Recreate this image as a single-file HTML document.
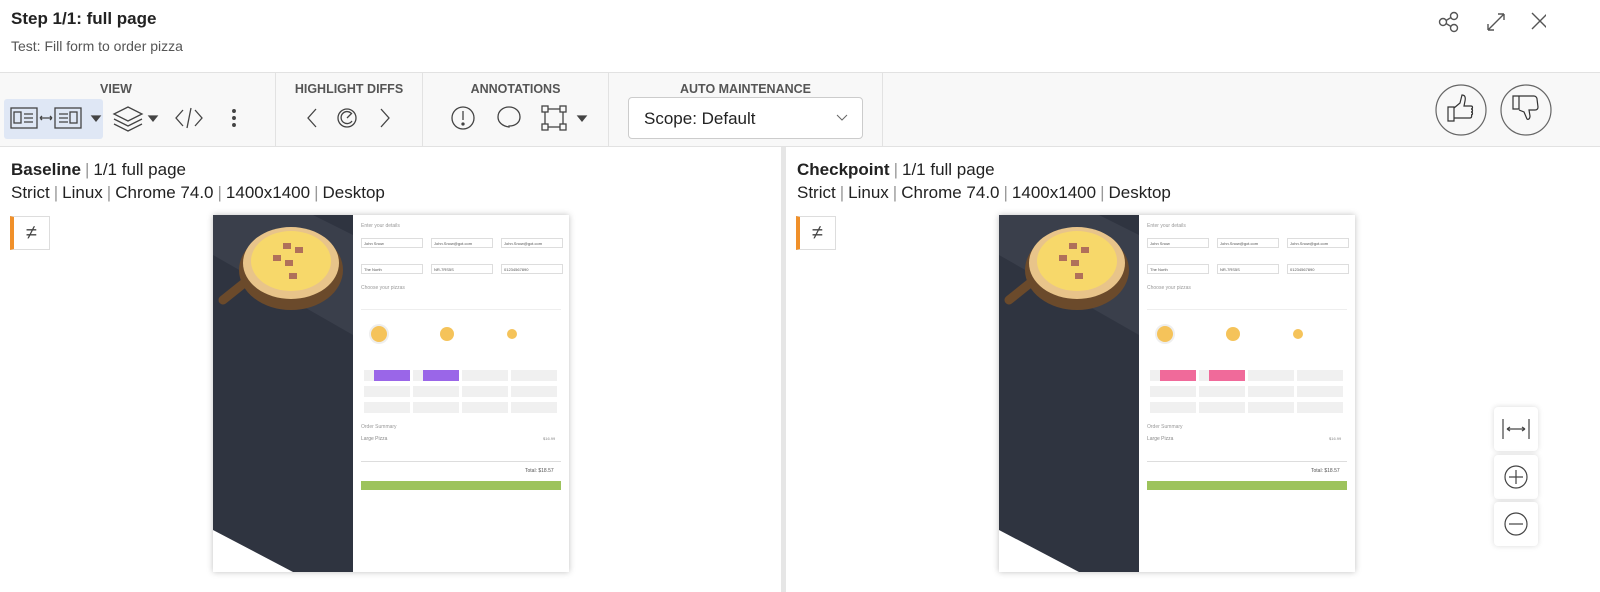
<!DOCTYPE html>
<html><head><style>
*{box-sizing:border-box;margin:0;padding:0}
body{width:1600px;height:592px;overflow:hidden;background:#fff;font-family:"Liberation Sans",sans-serif;color:#222;position:relative}
.abs{position:absolute}
.tb{top:72px;left:0;width:1600px;height:75px;background:#f8f8f8;border-top:1px solid #e2e2e2;border-bottom:1px solid #e2e2e2}
.lbl{font-size:12.5px;font-weight:bold;color:#555;top:9px;text-align:center}
.sep{top:0;width:1px;height:74px;background:#e2e2e2}
.meta1{font-size:17px}
.meta2{font-size:17px}
.pipe{color:#999;margin:0 4px}
.shot{width:356px;height:357px;background:#fff;box-shadow:0 0 6px rgba(0,0,0,.25);overflow:hidden}
.dark{left:0;top:0;width:140px;height:357px;background:#2f3440}
.f{position:absolute;font-size:4px;color:#888}
.inp{position:absolute;height:10px;width:62px;border:1px solid #ddd;font-size:4px;color:#555;padding:2px}
.tp{position:absolute;height:11px;width:46px;background:#f0f0f0}
.zb{width:44px;height:44px;background:#fff;border-radius:4px;box-shadow:0 0 6px rgba(0,0,0,.15)}
</style></head><body>
<div class="abs" style="left:11px;top:9px;font-size:17px;font-weight:bold">Step 1/1: full page</div>
<div class="abs" style="left:11px;top:38px;font-size:14px;color:#555">Test: Fill form to order pizza</div>
<svg class="abs" style="left:1436px;top:10px" width="110" height="24" viewBox="0 0 110 24" fill="none" stroke="#555" stroke-width="1.4">
<circle cx="7" cy="12" r="3.5"/><circle cx="18" cy="6" r="3.5"/><circle cx="18" cy="18" r="3.5"/><path d="M10 10.5L15 7.5M10 13.5L15 16.5"/>
<path d="M52 20L68 4M52 20v-6M52 20h6M68 4h-6M68 4v6"/>
<path d="M96 3l16 16M112 3L96 19"/></svg>
<div class="abs tb">
<div class="abs lbl" style="left:0;width:232px">VIEW</div>
<div class="abs sep" style="left:275px"></div>
<div class="abs lbl" style="left:276px;width:146px">HIGHLIGHT DIFFS</div>
<div class="abs sep" style="left:422px"></div>
<div class="abs lbl" style="left:423px;width:185px">ANNOTATIONS</div>
<div class="abs sep" style="left:608px"></div>
<div class="abs lbl" style="left:609px;width:273px">AUTO MAINTENANCE</div>
<div class="abs sep" style="left:882px"></div>
<div class="abs" style="left:4px;top:26px;width:99px;height:40px;background:#dfe7f5;border-radius:3px"></div>
<svg class="abs" style="left:0;top:26px" width="600" height="40" viewBox="0 0 600 40" fill="none" stroke="#444" stroke-width="1.3">
<rect x="11" y="9" width="26" height="20"/><rect x="14" y="13" width="7" height="11"/><path d="M24 15h9M24 19h9M24 23h9"/>
<path d="M40 19h12M40 19l2-2M40 19l2 2M52 19l-2-2M52 19l-2 2"/>
<rect x="55" y="9" width="26" height="20"/><path d="M59 15h9M59 19h9M59 23h9"/><rect x="70" y="13" width="7" height="11"/>
<path d="M92 17h8l-4 5z" fill="#444"/>
<path d="M114 15l14-7 14 7-14 7z M114 20l14 7 14-7 M114 25l14 7 14-7"/>
<path d="M149 17h8l-4 5z" fill="#444"/>
<path d="M183 11l-7 8 7 8M195 11l7 8-7 8M191 9l-4 20"/>
<circle cx="234" cy="12" r="1.3" fill="#444"/><circle cx="234" cy="19" r="1.3" fill="#444"/><circle cx="234" cy="26" r="1.3" fill="#444"/>
<path d="M316 10l-8 9 8 9M381 10l8 9-8 9"/>
<circle cx="347" cy="19" r="9"/><path d="M351 14a6 6 0 1 0 1 8M347 19l5-5"/>
<circle cx="463" cy="19" r="11"/><path d="M463 12v9"/><circle cx="463" cy="25" r="1" fill="#444"/>
<path d="M509 28c-7-1-11-5-11-10 0-6 5-10 11-10s11 4 11 10c0 5-4 9-11 9z"/>
<rect x="545" y="10" width="18" height="18"/><rect x="542" y="7" width="6" height="6" fill="#f8f8f8"/><rect x="560" y="7" width="6" height="6" fill="#f8f8f8"/><rect x="542" y="25" width="6" height="6" fill="#f8f8f8"/><rect x="560" y="25" width="6" height="6" fill="#f8f8f8"/>
<path d="M578 17h8l-4 5z" fill="#444"/></svg>
<div class="abs" style="left:628px;top:24px;width:235px;height:42px;background:#fff;border:1px solid #ccc;border-radius:4px;font-size:17px;padding:11px 15px">Scope: Default<svg class="abs" style="right:14px;top:16px" width="12" height="8" fill="none" stroke="#666"><path d="M1 1l5 5 5-5"/></svg></div>
<svg class="abs" style="left:1435px;top:11px" width="130" height="54" viewBox="0 0 130 54" fill="none" stroke="#666" stroke-width="1.2">
<circle cx="26" cy="26" r="25"/><circle cx="91" cy="26" r="25"/>
<path d="M13 23h6v14h-6zM19 24l6-5 2-8c2 0 4 1 3 6l-1 5h7c2 0 2 3 0 3 2 0 2 3 0 3 2 0 2 3 0 3 1 0 1 3-1 3H19" stroke="#333"/>
<path d="M78 12h6v13h-6zM84 12h15c2 0 3 2 3 3l1 8c0 2-1 3-3 3h-6l1 6c0 3-2 4-3 3l-3-7-5-2" stroke="#333"/></svg>
</div>
<div class="abs" style="left:781px;top:147px;width:5px;height:445px;background:#e6e6e6"></div>

<div class="abs meta1" style="left:11px;top:160px"><b>Baseline</b><span class="pipe">|</span>1/1 full page</div>
<div class="abs meta2" style="left:11px;top:183px">Strict<span class="pipe">|</span>Linux<span class="pipe">|</span>Chrome 74.0<span class="pipe">|</span>1400x1400<span class="pipe">|</span>Desktop</div>
<div class="abs meta1" style="left:797px;top:160px"><b>Checkpoint</b><span class="pipe">|</span>1/1 full page</div>
<div class="abs meta2" style="left:797px;top:183px">Strict<span class="pipe">|</span>Linux<span class="pipe">|</span>Chrome 74.0<span class="pipe">|</span>1400x1400<span class="pipe">|</span>Desktop</div>

<div class="abs" style="left:10px;top:216px;width:40px;height:34px;border:1px solid #ddd;border-left:4px solid #f0902a;font-size:20px;text-align:center;line-height:32px;color:#444">≠</div>
<div class="abs" style="left:796px;top:216px;width:40px;height:34px;border:1px solid #ddd;border-left:4px solid #f0902a;font-size:20px;text-align:center;line-height:32px;color:#444">≠</div>

<!--SHOT-->
<div class="abs shot" style="left:213px;top:215px" id="s1"></div>
<div class="abs shot" style="left:999px;top:215px" id="s2"></div>

<div class="abs zb" style="left:1494px;top:407px"><svg width="44" height="44" fill="none" stroke="#444" stroke-width="1.2"><path d="M9 12v20M35 12v20M13 22h18M13 22l3-2M13 22l3 2M31 22l-3-2M31 22l-3 2"/></svg></div>
<div class="abs zb" style="left:1494px;top:455px"><svg width="44" height="44" fill="none" stroke="#444" stroke-width="1.2"><circle cx="22" cy="22" r="11"/><path d="M22 15v14M15 22h14"/></svg></div>
<div class="abs zb" style="left:1494px;top:502px"><svg width="44" height="44" fill="none" stroke="#444" stroke-width="1.2"><circle cx="22" cy="22" r="11"/><path d="M15 22h14"/></svg></div>

<template id="tpl">
<div class="abs dark"></div>
<svg class="abs" style="left:0;top:0" width="140" height="357"><polygon points="100,0 140,20 140,120 0,40 0,0" fill="#3a3f4b"/><polygon points="0,315 0,357 80,357" fill="#fff"/>
<ellipse cx="78" cy="55" rx="52" ry="40" fill="#6b4a2b"/><path d="M35 65L10 85" stroke="#6b4a2b" stroke-width="9" stroke-linecap="round"/>
<ellipse cx="78" cy="48" rx="48" ry="36" fill="#e8c48a"/><ellipse cx="78" cy="46" rx="40" ry="30" fill="#f7d86a"/>
<g fill="#b0705a"><rect x="70" y="28" width="8" height="6"/><rect x="82" y="32" width="8" height="6"/><rect x="60" y="40" width="8" height="6"/><rect x="72" y="45" width="8" height="6"/><rect x="76" y="58" width="8" height="6"/></g></svg>
<div class="abs" style="left:140px;top:0;width:216px;height:357px">
<div class="f" style="left:8px;top:8px;font-size:5px;color:#999">Enter your details</div>
<div class="inp" style="left:8px;top:23px">John Snow</div><div class="inp" style="left:78px;top:23px">John.Snow@got.com</div><div class="inp" style="left:148px;top:23px">John.Snow@got.com</div>
<div class="inp" style="left:8px;top:49px">The North</div><div class="inp" style="left:78px;top:49px">NR-7RS5S</div><div class="inp" style="left:148px;top:49px">01234567890</div>
<div class="f" style="left:8px;top:70px;font-size:5px;color:#999">Choose your pizzas</div>
<div class="abs" style="left:8px;top:94px;width:200px;height:1px;background:#eee"></div>
<svg class="abs" style="left:14px;top:107px" width="160" height="24"><circle cx="12" cy="12" r="10" fill="#eee"/><circle cx="12" cy="12" r="8" fill="#f5c35a"/><circle cx="80" cy="12" r="7" fill="#f5c35a"/><circle cx="145" cy="12" r="5" fill="#f5c35a"/></svg>
<div class="tp" style="left:11px;top:155px"></div><div class="tp" style="left:60px;top:155px"></div><div class="tp" style="left:109px;top:155px"></div><div class="tp" style="left:158px;top:155px"></div>
<div class="tp" style="left:11px;top:171px"></div><div class="tp" style="left:60px;top:171px"></div><div class="tp" style="left:109px;top:171px"></div><div class="tp" style="left:158px;top:171px"></div>
<div class="tp" style="left:11px;top:187px"></div><div class="tp" style="left:60px;top:187px"></div><div class="tp" style="left:109px;top:187px"></div><div class="tp" style="left:158px;top:187px"></div>
<div class="tp hl" style="left:21px;top:155px;width:36px"></div><div class="tp hl" style="left:70px;top:155px;width:36px"></div>
<div class="f" style="left:8px;top:209px;font-size:5px;color:#999">Order Summary</div>
<div class="f" style="left:8px;top:221px;font-size:5px">Large Pizza</div><div class="f" style="left:190px;top:221px">$16.99</div>
<div class="abs" style="left:8px;top:246px;width:200px;height:1px;background:#ddd"></div>
<div class="f" style="left:172px;top:253px;font-size:5px;color:#555">Total: $18.57</div>
<div class="abs" style="left:8px;top:266px;width:200px;height:9px;background:#9dc35c"></div>
</div>
</template>
<script>
var t=document.getElementById('tpl').innerHTML;
var a=document.getElementById('s1'),b=document.getElementById('s2');
a.innerHTML=t;b.innerHTML=t;
a.querySelectorAll('.hl').forEach(e=>e.style.background='#9a66e8');
b.querySelectorAll('.hl').forEach(e=>e.style.background='#f06a9a');
</script>
</body></html>
